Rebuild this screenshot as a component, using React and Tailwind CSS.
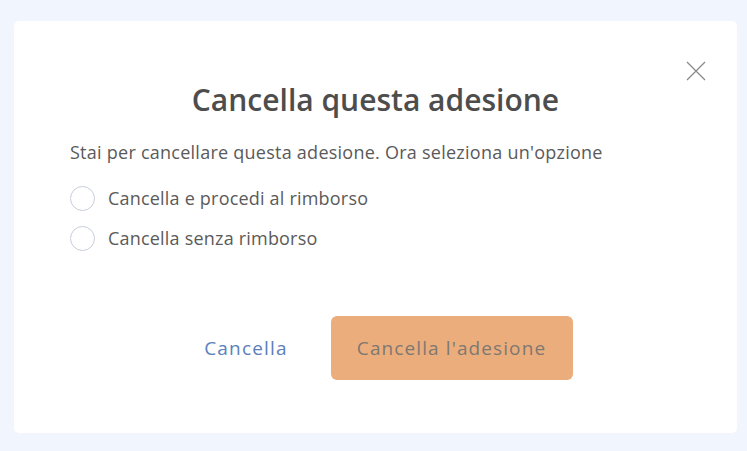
import React from "react";

export default function App() {
  return (
    <div className="min-h-[451px] w-[747px] bg-[#f1f5fd] pt-[21px] pl-[14px]" style={{ fontFamily: "'Open Sans', sans-serif" }}>
      <div className="relative w-[723px] h-[412px] rounded-[5px] bg-white flex flex-col pt-[59px] px-[56px]">
        <button className="absolute left-[672px] top-[40px] w-[20px] h-[20px] flex items-center justify-center">
          <svg width="20" height="20" viewBox="0 0 20 20" fill="none" stroke="#8a8a8a" strokeWidth="1.3">
            <path d="M1 1 L19 19 M19 1 L1 19" />
          </svg>
        </button>
        <h1 className="text-center text-[30px] leading-[40px] font-semibold text-[#4d4d4d]">Cancella questa adesione</h1>
        <p className="mt-[20px] text-[18px] leading-[24px] tracking-[0.25px] text-[#5a5a5a]">Stai per cancellare questa adesione. Ora seleziona un'opzione</p>
        <div className="mt-[14px] flex flex-col">
          {["Cancella e procedi al rimborso", "Cancella senza rimborso"].map((t) => (
            <label key={t} className="h-[40px] flex items-center gap-[13px]">
              <span className="w-[25px] h-[25px] rounded-full border border-[#c8cedb] bg-white" />
              <span className="text-[18px] tracking-[0.2px] text-[#5a5a5a]">{t}</span>
            </label>
          ))}
        </div>
        <div className="mt-[58px] flex justify-center items-center gap-[18px] pl-[1px]">
          <button className="w-[133px] h-[64px] text-[19px] tracking-[1.2px] text-[#5b80bb]">Cancella</button>
          <button className="w-[242px] h-[64px] rounded-[6px] bg-[#ecad7c] text-[19px] tracking-[1.1px] text-[#7e7872]">Cancella l'adesione</button>
        </div>
      </div>
    </div>
  );
}
